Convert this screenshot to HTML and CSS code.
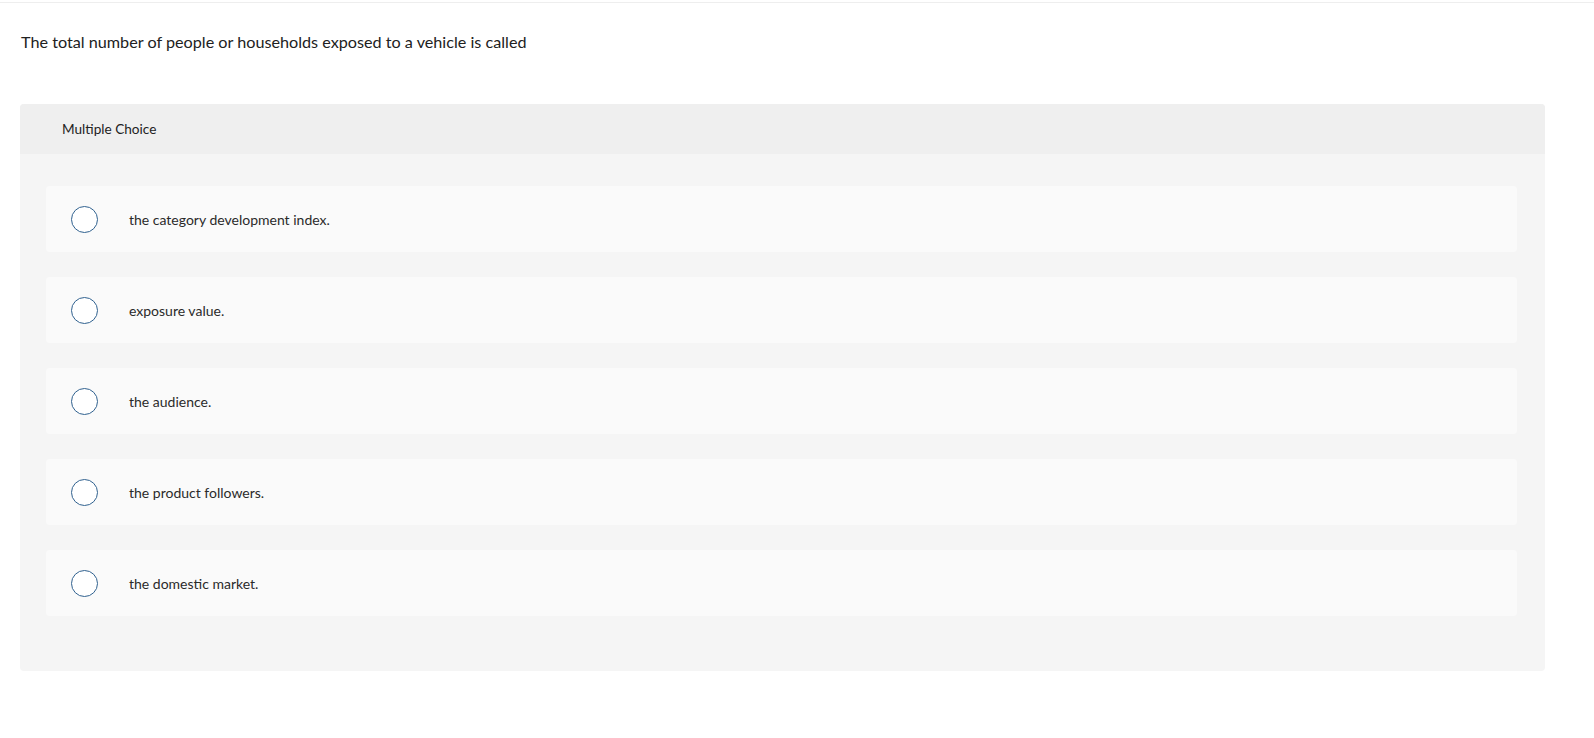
FILE: index.html
```html
<!DOCTYPE html>
<html lang="en">
<head>
<meta charset="utf-8">
<title>Multiple Choice</title>
<link rel="stylesheet" href="styles.css">
</head>
<body>
<div class="topline"></div>
<p class="question">The total number of people or households exposed to a vehicle is called</p>
<section class="card">
  <div class="card-header">Multiple Choice</div>
  <div class="card-body">
    <label class="option"><span class="radio"></span><span class="option-text">the category development index.</span></label>
    <label class="option"><span class="radio"></span><span class="option-text">exposure value.</span></label>
    <label class="option"><span class="radio"></span><span class="option-text">the audience.</span></label>
    <label class="option"><span class="radio"></span><span class="option-text">the product followers.</span></label>
    <label class="option"><span class="radio"></span><span class="option-text">the domestic market.</span></label>
  </div>
</section>
</body>
</html>
```

FILE: styles.css
```css
html, body {
  margin: 0;
  padding: 0;
  background: #ffffff;
}

body {
  font-family: Lato, "Open Sans", "Liberation Sans", sans-serif;
  color: #222;
}

.topline {
  height: 2px;
  border-bottom: 1px solid #eeeeee;
}

.question {
  margin: 27px 0 0 21px;
  font-size: 16.2px;
  line-height: 24px;
  color: #212121;
}

.card {
  margin: 50px 49px 0 20px;
  background: #f5f5f5;
  border-radius: 4px;
  overflow: hidden;
}

.card-header {
  height: 50px;
  display: flex;
  align-items: center;
  padding-left: 42px;
  background: #efefef;
  font-size: 13.6px;
  color: #222;
}

.card-body {
  display: flex;
  flex-direction: column;
  gap: 25px;
  padding: 32px 28px 55px 26px;
}

.option {
  height: 66px;
  display: flex;
  align-items: center;
  padding-left: 25px;
  background: #fafafa;
  border-radius: 4px;
}

.radio {
  width: 25px;
  height: 25px;
  border: 1.6px solid #30618f;
  border-radius: 50%;
  flex: none;
  background: #fff;
}

.option-text {
  margin-left: 31px;
  font-size: 14px;
  color: #2a2a2a;
}
```
